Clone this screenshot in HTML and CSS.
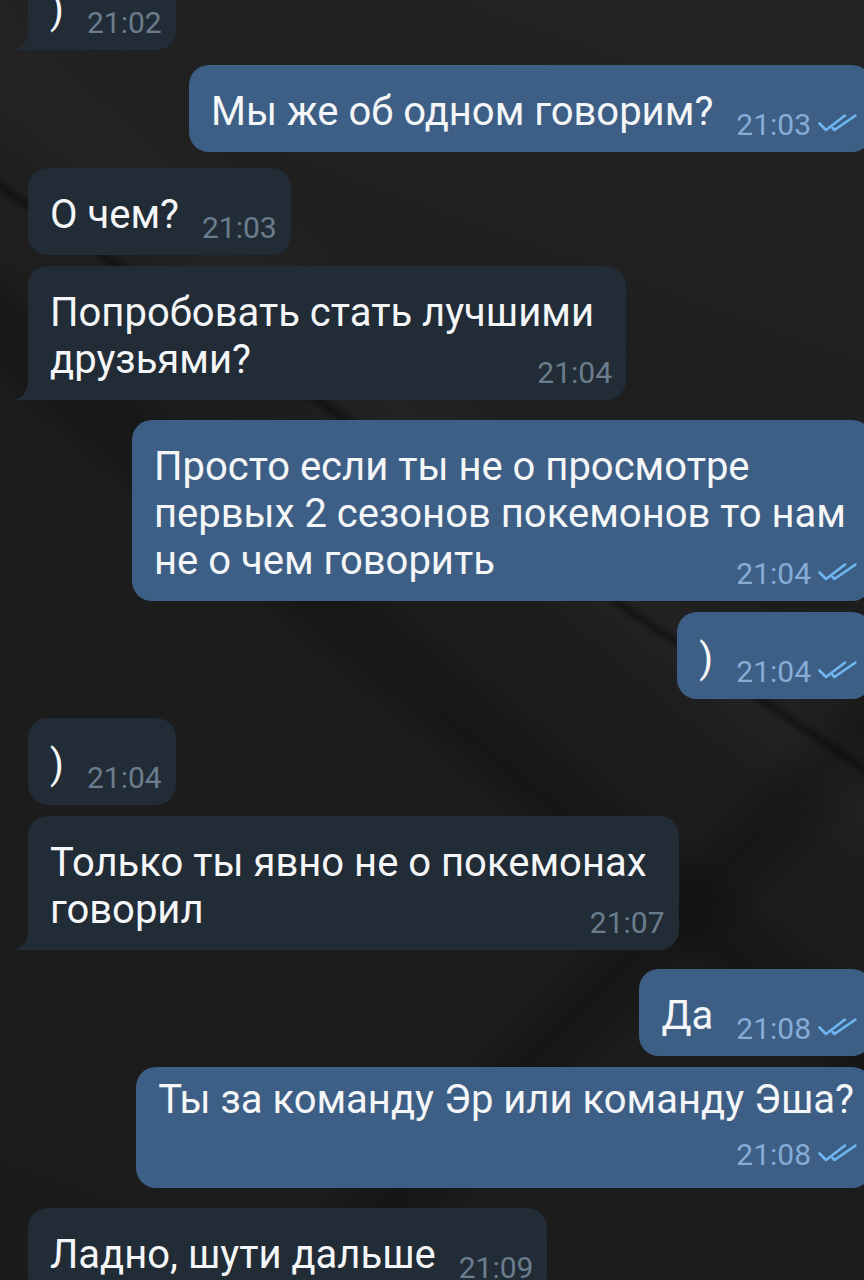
FILE: index.html
```html
<!DOCTYPE html>
<html lang="ru">
<head>
<meta charset="utf-8">
<title>Чат</title>
<link rel="stylesheet" href="styles.css">
</head>
<body>
<svg class="defs" width="0" height="0" aria-hidden="true">
  <symbol id="chk" viewBox="0 0 40 20">
    <path d="M1.5 10.5 L8 17 L27 2.5" />
    <path d="M14.5 15 L16.5 17 L37.5 2.5" />
  </symbol>
</svg>
<main class="chat">
  <section class="group">
    <div class="bubble in tail">
      <div class="last"><span class="text">)</span><span class="meta">21:02</span></div>
    </div>
  </section>

  <section class="group out near">
    <div class="bubble out">
      <div class="last"><span class="text">Мы же об одном говорим?</span><span class="meta">21:03<svg class="chk"><use href="#chk"/></svg></span></div>
    </div>
  </section>

  <section class="group near2">
    <div class="bubble in">
      <div class="last"><span class="text">О чем?</span><span class="meta">21:03</span></div>
    </div>
    <div class="bubble in tail">
      <div class="line">Попробовать стать лучшими</div>
      <div class="last"><span class="text">друзьями?</span><span class="meta">21:04</span></div>
    </div>
  </section>

  <section class="group out far">
    <div class="bubble out">
      <div class="line">Просто если ты не о просмотре</div>
      <div class="line">первых 2 сезонов покемонов то нам</div>
      <div class="last"><span class="text">не о чем говорить</span><span class="meta">21:04<svg class="chk"><use href="#chk"/></svg></span></div>
    </div>
    <div class="bubble out">
      <div class="last"><span class="text">)</span><span class="meta">21:04<svg class="chk"><use href="#chk"/></svg></span></div>
    </div>
  </section>

  <section class="group">
    <div class="bubble in">
      <div class="last"><span class="text">)</span><span class="meta">21:04</span></div>
    </div>
    <div class="bubble in tail">
      <div class="line">Только ты явно не о покемонах</div>
      <div class="last"><span class="text">говорил</span><span class="meta">21:07</span></div>
    </div>
  </section>

  <section class="group out">
    <div class="bubble out">
      <div class="last"><span class="text">Да</span><span class="meta">21:08<svg class="chk"><use href="#chk"/></svg></span></div>
    </div>
    <div class="bubble out split">
      <div class="line">Ты за команду Эр или команду Эша?</div>
      <div class="meta-row"><span class="meta">21:08<svg class="chk"><use href="#chk"/></svg></span></div>
    </div>
  </section>

  <section class="group far">
    <div class="bubble in">
      <div class="last"><span class="text">Ладно, шути дальше</span><span class="meta">21:09</span></div>
    </div>
  </section>
</main>
</body>
</html>
```

FILE: styles.css
```css
html, body {
  margin: 0;
  padding: 0;
}

body {
  width: 864px;
  height: 1280px;
  overflow: hidden;
  font-family: Roboto, "Noto Sans", "Liberation Sans", sans-serif;
  color: #f4f6f8;
  background-color: #1b1b1b;
  background-image:
    linear-gradient(34deg, transparent 58.2%, rgba(0, 0, 0, 0.38) 58.7%, transparent 59.3%),
    linear-gradient(40deg, transparent 44%, rgba(0, 0, 0, 0.22) 46.5%, rgba(0, 0, 0, 0.16) 49%, transparent 51%),
    linear-gradient(135deg, transparent 71%, rgba(0, 0, 0, 0.22) 74%, rgba(0, 0, 0, 0.14) 76%, transparent 78%),
    linear-gradient(40deg, transparent 56%, rgba(255, 255, 255, 0.025) 60%, transparent 66%),
    linear-gradient(200deg, #242424 0%, #1d1d1d 40%, #1b1b1b 100%);
}

.defs {
  display: block;
  width: 0;
  height: 0;
  overflow: hidden;
}

.chat {
  display: flex;
  flex-direction: column;
  gap: 19px;
  margin-top: -37px;
  padding-left: 28px;
}

.group {
  display: flex;
  flex-direction: column;
  align-items: flex-start;
  gap: 11px;
}

.group.out {
  align-items: flex-end;
}

.group.near {
  margin-top: -4px;
}

.group.near2 {
  margin-top: -3px;
}

.group.far {
  margin-top: 1px;
}

.bubble {
  position: relative;
  box-sizing: border-box;
  padding: 23px 14px 10px 22px;
  border-radius: 20px;
  font-size: 40px;
  line-height: 47px;
  white-space: nowrap;
}

.bubble.in {
  background: #212c37;
}

.bubble.out {
  background: #3d5f86;
  margin-right: -8px;
  padding-right: 14px;
}

.bubble.in .line {
  padding-right: 18px;
}

.bubble.out .line {
  padding-right: 12px;
}

.bubble.in.tail {
  border-bottom-left-radius: 0;
}

.bubble.in.tail::before {
  content: "";
  position: absolute;
  left: -15px;
  bottom: 0;
  width: 15px;
  height: 17px;
  background: radial-gradient(ellipse 15px 17px at 0 0, transparent 96%, #212c37 100%);
}

.line {
  display: block;
}

.last {
  display: flex;
  align-items: flex-end;
  justify-content: space-between;
}

.last .text {
  margin-bottom: 7px;
}

.meta {
  display: inline-flex;
  align-items: center;
  gap: 7px;
  margin-left: 23px;
  font-size: 30px;
  line-height: 34px;
  color: #6b7c8d;
}

.out .meta {
  color: #86acd6;
}

.chk {
  width: 40px;
  height: 20px;
  fill: none;
  stroke: #6fb6f2;
  stroke-width: 2.6;
  stroke-linecap: round;
  stroke-linejoin: round;
  margin-top: -4px;
}

.bubble.split {
  padding-top: 9px;
  padding-bottom: 16px;
}

.bubble.out.split .line {
  padding-right: 4px;
}

.meta-row {
  display: flex;
  justify-content: flex-end;
  margin-top: 15px;
}
```
